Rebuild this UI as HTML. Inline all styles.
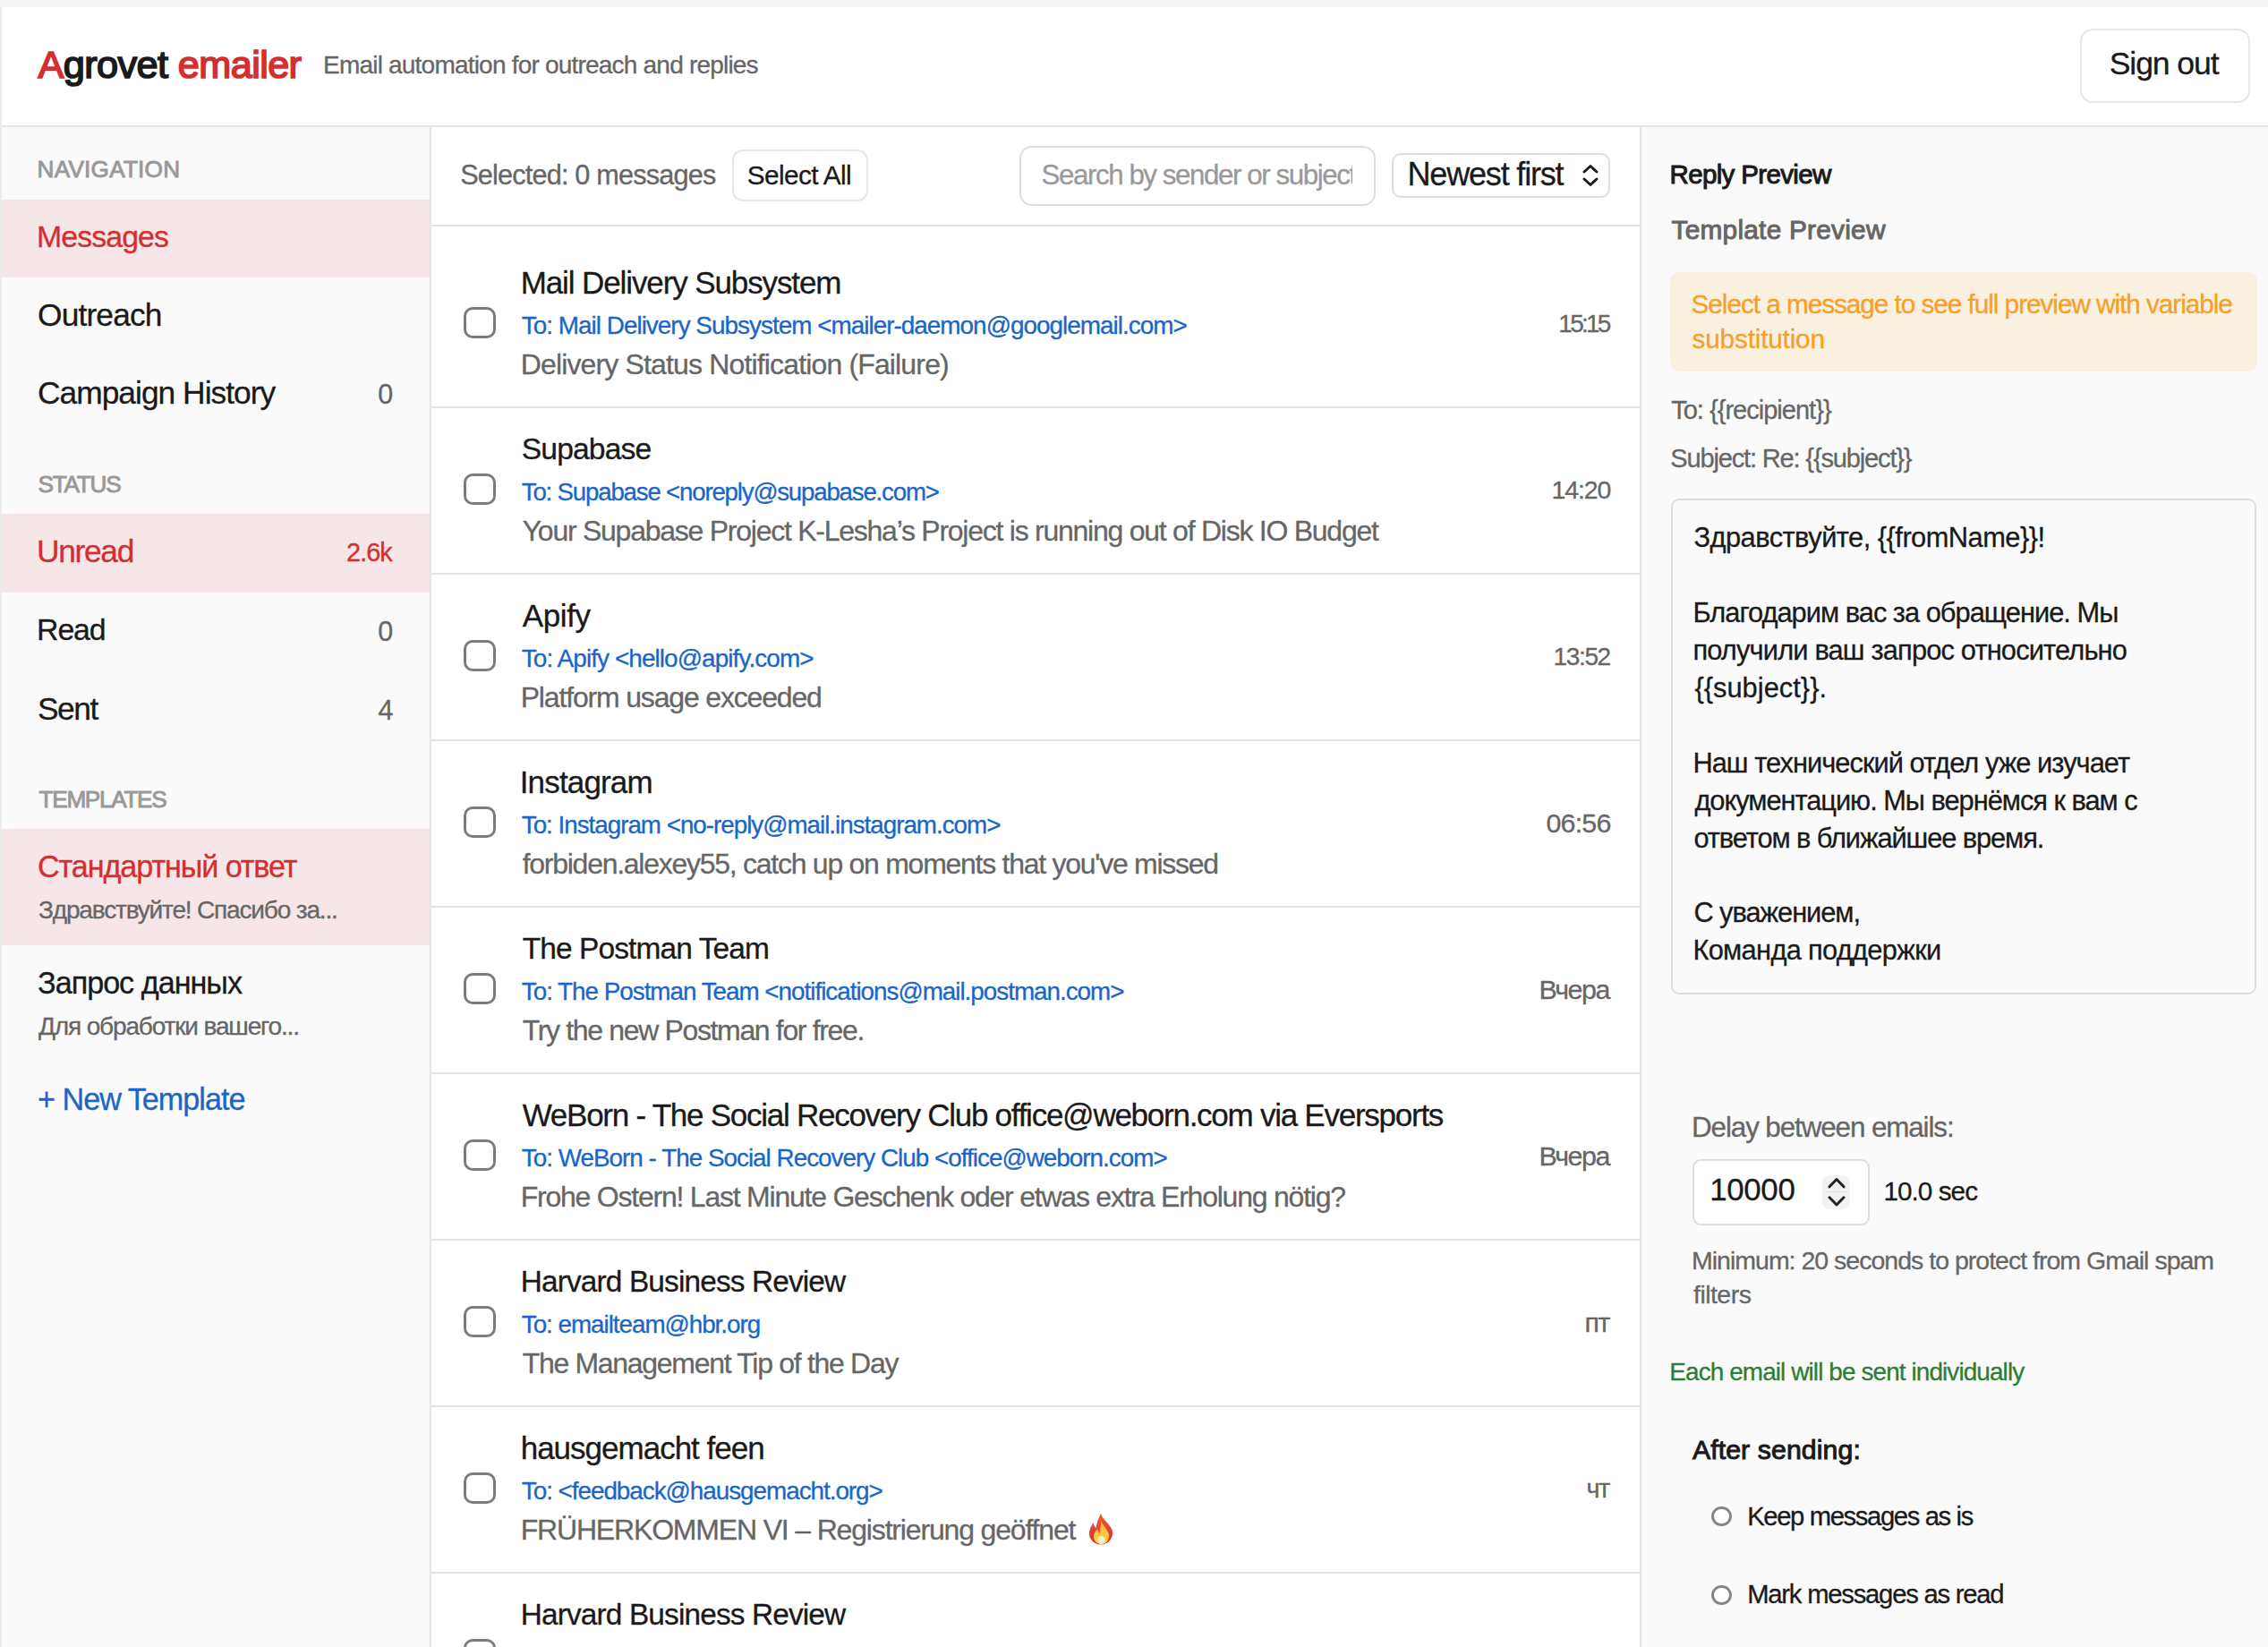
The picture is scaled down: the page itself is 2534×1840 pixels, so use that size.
<!DOCTYPE html>
<html><head><meta charset="utf-8"><title>Agrovet emailer</title>
<style>
html,body{margin:0;padding:0;}
body{width:2534px;height:1840px;position:relative;overflow:hidden;background:#f2f2f2;font-family:"Liberation Sans", sans-serif;}
.t{position:absolute;white-space:pre;line-height:1;-webkit-text-stroke:0.3px currentColor;}
</style></head><body>
<div style="position:absolute;left:0px;top:0px;width:2534px;height:8px;background:#f4f4f4"></div>
<div style="position:absolute;left:0px;top:8px;width:2px;height:1832px;background:#eaecef"></div>
<div style="position:absolute;left:2px;top:8px;width:2532px;height:132px;background:#ffffff"></div>
<div style="position:absolute;left:2px;top:140px;width:2532px;height:2px;background:#e3e3e3"></div>
<div style="position:absolute;left:2px;top:142px;width:478px;height:1698px;background:#fafafa"></div>
<div style="position:absolute;left:480px;top:142px;width:2px;height:1698px;background:#e3e3e3"></div>
<div style="position:absolute;left:482px;top:142px;width:1350px;height:1698px;background:#ffffff"></div>
<div style="position:absolute;left:1832px;top:142px;width:2px;height:1698px;background:#e3e3e3"></div>
<div style="position:absolute;left:1834px;top:142px;width:700px;height:1698px;background:#fafafa"></div>
<div style="position:absolute;left:2324px;top:32px;width:190px;height:83px;box-sizing:border-box;border:2px solid #e6e7ea;border-radius:14px;background:#fff"></div>
<div style="position:absolute;left:2px;top:222.6px;width:478px;height:87.00000000000003px;background:#f6e6e7"></div>
<div style="position:absolute;left:2px;top:574px;width:478px;height:87.5px;background:#f6e6e7"></div>
<div style="position:absolute;left:2px;top:926px;width:478px;height:129.5px;background:#f6e6e7"></div>
<div style="position:absolute;left:482px;top:251px;width:1350px;height:2px;background:#e3e3e3"></div>
<div style="position:absolute;left:818px;top:166.5px;width:152px;height:58.69999999999999px;box-sizing:border-box;border:2px solid #e6e7ea;border-radius:12px;background:#fff"></div>
<div style="position:absolute;left:1138.7px;top:162.5px;width:398.5px;height:67.5px;box-sizing:border-box;border:2px solid #dedede;border-radius:14px;background:#fff"></div>
<div style="position:absolute;left:1554.7px;top:170.8px;width:244.70000000000005px;height:50.19999999999999px;box-sizing:border-box;border:2px solid #dedede;border-radius:10px;background:#fff"></div>
<svg style="position:absolute;left:1764px;top:182px" width="26" height="28" viewBox="0 0 26 28"><path d="M6 10 L13 3.5 L20 10 M6 18 L13 24.5 L20 18" fill="none" stroke="#1a1a1a" stroke-width="2.9" stroke-linecap="round" stroke-linejoin="round"/></svg>
<div style="position:absolute;left:482px;top:453.5px;width:1350px;height:2.0px;background:#e3e3e3"></div>
<div style="position:absolute;left:518.2px;top:343.0px;width:35.39999999999998px;height:35.39999999999998px;box-sizing:border-box;border:3px solid #7c7c7c;border-radius:10px;background:#fff"></div>
<div style="position:absolute;left:482px;top:639.5px;width:1350px;height:2.0px;background:#e3e3e3"></div>
<div style="position:absolute;left:518.2px;top:529.0px;width:35.39999999999998px;height:35.39999999999998px;box-sizing:border-box;border:3px solid #7c7c7c;border-radius:10px;background:#fff"></div>
<div style="position:absolute;left:482px;top:825.5px;width:1350px;height:2.0px;background:#e3e3e3"></div>
<div style="position:absolute;left:518.2px;top:715.0px;width:35.39999999999998px;height:35.39999999999998px;box-sizing:border-box;border:3px solid #7c7c7c;border-radius:10px;background:#fff"></div>
<div style="position:absolute;left:482px;top:1011.5px;width:1350px;height:2.0px;background:#e3e3e3"></div>
<div style="position:absolute;left:518.2px;top:901.0px;width:35.39999999999998px;height:35.39999999999998px;box-sizing:border-box;border:3px solid #7c7c7c;border-radius:10px;background:#fff"></div>
<div style="position:absolute;left:482px;top:1197.5px;width:1350px;height:2.0px;background:#e3e3e3"></div>
<div style="position:absolute;left:518.2px;top:1087.0px;width:35.39999999999998px;height:35.40000000000009px;box-sizing:border-box;border:3px solid #7c7c7c;border-radius:10px;background:#fff"></div>
<div style="position:absolute;left:482px;top:1383.5px;width:1350px;height:2.0px;background:#e3e3e3"></div>
<div style="position:absolute;left:518.2px;top:1273.0px;width:35.39999999999998px;height:35.40000000000009px;box-sizing:border-box;border:3px solid #7c7c7c;border-radius:10px;background:#fff"></div>
<div style="position:absolute;left:482px;top:1569.5px;width:1350px;height:2.0px;background:#e3e3e3"></div>
<div style="position:absolute;left:518.2px;top:1459.0px;width:35.39999999999998px;height:35.40000000000009px;box-sizing:border-box;border:3px solid #7c7c7c;border-radius:10px;background:#fff"></div>
<div style="position:absolute;left:482px;top:1755.5px;width:1350px;height:2.0px;background:#e3e3e3"></div>
<div style="position:absolute;left:518.2px;top:1645.0px;width:35.39999999999998px;height:35.40000000000009px;box-sizing:border-box;border:3px solid #7c7c7c;border-radius:10px;background:#fff"></div>
<svg style="position:absolute;left:1215px;top:1690px" width="31" height="36" viewBox="0 0 31 36"><defs><linearGradient id="fl" x1="0" y1="0" x2="0" y2="1"><stop offset="0" stop-color="#f0563a"/><stop offset="1" stop-color="#d9302a"/></linearGradient><linearGradient id="fl2" x1="0" y1="0" x2="0" y2="1"><stop offset="0" stop-color="#fbb03b"/><stop offset="1" stop-color="#ffd54a"/></linearGradient></defs><path d="M15 0.5 C16 7 24 11 27.5 19 C30 27 24 35.5 15.5 35.5 C7 35.5 1.5 29.5 2 22 C2.5 17 5 14 6.5 11 C7 14 8 16 9.5 17 C10 11 13 6 15 0.5 Z" fill="url(#fl)"/><path d="M15.5 9 C17 15 23 18 24 25 C24.5 31 20.5 35 15.5 35 C10.5 35 6.5 31.5 7 26 C7.5 22 10 20 11 18 C12 21 13 22 13.5 23 C14 18 15 13 15.5 9 Z" fill="url(#fl2)"/><ellipse cx="15.5" cy="30.5" rx="4.2" ry="4.5" fill="#fff0d0"/></svg>
<div style="position:absolute;left:518.2px;top:1831.0px;width:35.39999999999998px;height:35.40000000000009px;box-sizing:border-box;border:3px solid #7c7c7c;border-radius:10px;background:#fff"></div>
<div style="position:absolute;left:1866.3px;top:304px;width:655.3px;height:111.30000000000001px;background:#f9f0df;border-radius:10px"></div>
<div style="position:absolute;left:1867px;top:556.5px;width:654px;height:554.0px;box-sizing:border-box;border:2px solid #dedede;border-radius:9px;background:#fafafa"></div>
<div style="position:absolute;left:1891px;top:1295px;width:198.4000000000001px;height:74px;box-sizing:border-box;border:2px solid #dedede;border-radius:9px;background:#fff"></div>
<div style="position:absolute;left:2036.4px;top:1312.9px;width:31.09999999999991px;height:38.299999999999955px;background:#f2f2f2;border-radius:8px"></div>
<div style="position:absolute;left:2041px;top:1331.2px;width:22px;height:1.2000000000000455px;background:#dcdcdc"></div>
<svg style="position:absolute;left:2036px;top:1313px" width="32" height="38" viewBox="0 0 32 38"><path d="M8 12.8 L16 4.5 L24 12.8 M8 24.8 L16 33 L24 24.8" fill="none" stroke="#222" stroke-width="3" stroke-linecap="round" stroke-linejoin="round"/></svg>
<div style="position:absolute;left:1912.3px;top:1682.6px;width:23.200000000000045px;height:22.700000000000045px;box-sizing:border-box;border:3px solid #858585;border-radius:50%;background:#fff"></div>
<div style="position:absolute;left:1912.3px;top:1770.5px;width:23.200000000000045px;height:22.700000000000045px;box-sizing:border-box;border:3px solid #858585;border-radius:50%;background:#fff"></div>
<div class="t" style="left:42.60px;top:50.93px;font-size:43.31px;color:#1a1a1a;font-weight:normal;letter-spacing:-0.628px;-webkit-text-stroke:1.7px currentColor"><span style="color:#d32f2f">A</span>grovet <span style="color:#d32f2f">emailer</span></div>
<div class="t" style="left:361.00px;top:59.15px;font-size:28.05px;color:#666;font-weight:normal;letter-spacing:-0.813px;">Email automation for outreach and replies</div>
<div class="t" style="left:2356.70px;top:53.86px;font-size:35.61px;color:#1a1a1a;font-weight:normal;letter-spacing:-1.096px;">Sign out</div>
<div class="t" style="left:41.60px;top:176.15px;font-size:26.16px;color:#999;font-weight:normal;letter-spacing:0.228px;-webkit-text-stroke:0.9px currentColor">NAVIGATION</div>
<div class="t" style="left:41.08px;top:247.83px;font-size:33.87px;color:#d32f2f;font-weight:normal;letter-spacing:-0.930px;">Messages</div>
<div class="t" style="left:42.00px;top:334.00px;font-size:35.32px;color:#1a1a1a;font-weight:normal;letter-spacing:-0.837px;">Outreach</div>
<div class="t" style="left:42.00px;top:421.40px;font-size:35.32px;color:#1a1a1a;font-weight:normal;letter-spacing:-0.964px;">Campaign History</div>
<div class="t" style="left:422.30px;top:425.46px;font-size:30.52px;color:#666;font-weight:normal;letter-spacing:0.000px;">0</div>
<div class="t" style="left:42.60px;top:528.15px;font-size:26.16px;color:#999;font-weight:normal;letter-spacing:-1.251px;-webkit-text-stroke:0.9px currentColor">STATUS</div>
<div class="t" style="left:41.00px;top:597.60px;font-size:35.32px;color:#d32f2f;font-weight:normal;letter-spacing:-1.307px;">Unread</div>
<div class="t" style="left:387.05px;top:602.99px;font-size:28.95px;color:#d32f2f;font-weight:normal;letter-spacing:-0.987px;">2.6k</div>
<div class="t" style="left:41.08px;top:686.95px;font-size:33.84px;color:#1a1a1a;font-weight:normal;letter-spacing:-1.125px;">Read</div>
<div class="t" style="left:422.30px;top:689.76px;font-size:30.52px;color:#666;font-weight:normal;letter-spacing:0.000px;">0</div>
<div class="t" style="left:42.00px;top:773.60px;font-size:35.32px;color:#1a1a1a;font-weight:normal;letter-spacing:-1.435px;">Sent</div>
<div class="t" style="left:422.50px;top:777.66px;font-size:30.52px;color:#666;font-weight:normal;letter-spacing:0.000px;">4</div>
<div class="t" style="left:43.60px;top:880.35px;font-size:26.16px;color:#999;font-weight:normal;letter-spacing:-1.317px;-webkit-text-stroke:0.9px currentColor">TEMPLATES</div>
<div class="t" style="left:42.00px;top:951.29px;font-size:34.16px;color:#d32f2f;font-weight:normal;letter-spacing:-1.079px;">Стандартный ответ</div>
<div class="t" style="left:43.00px;top:1002.55px;font-size:28.05px;color:#666;font-weight:normal;letter-spacing:-1.187px;">Здравствуйте! Спасибо за...</div>
<div class="t" style="left:42.00px;top:1081.19px;font-size:34.16px;color:#1a1a1a;font-weight:normal;letter-spacing:-0.998px;">Запрос данных</div>
<div class="t" style="left:43.00px;top:1132.55px;font-size:28.05px;color:#666;font-weight:normal;letter-spacing:-1.168px;">Для обработки вашего...</div>
<div class="t" style="left:42.00px;top:1211.09px;font-size:34.16px;color:#1a66c8;font-weight:normal;letter-spacing:-0.981px;">+ New Template</div>
<div class="t" style="left:514.20px;top:180.14px;font-size:30.67px;color:#666;font-weight:normal;letter-spacing:-0.816px;">Selected: 0 messages</div>
<div class="t" style="left:834.80px;top:180.88px;font-size:29.80px;color:#1a1a1a;font-weight:normal;letter-spacing:-0.625px;">Select All</div>
<div class="t" style="left:1163.50px;top:179.65px;font-size:31.25px;color:#999;font-weight:normal;letter-spacing:-1.401px;;width:347.50px;overflow:hidden;padding-bottom:0.3em">Search by sender or subject</div>
<div class="t" style="left:1572.50px;top:176.59px;font-size:36.05px;color:#1a1a1a;font-weight:normal;letter-spacing:-1.199px;">Newest first</div>
<div class="t" style="left:581.70px;top:297.65px;font-size:35.03px;color:#1a1a1a;font-weight:normal;letter-spacing:-1.116px;">Mail Delivery Subsystem</div>
<div class="t" style="left:582.80px;top:349.72px;font-size:27.86px;color:#1a66c8;font-weight:normal;letter-spacing:-0.973px;">To: Mail Delivery Subsystem &lt;mailer-daemon@googlemail.com&gt;</div>
<div class="t" style="left:581.70px;top:390.53px;font-size:31.98px;color:#666;font-weight:normal;letter-spacing:-0.834px;">Delivery Status Notification (Failure)</div>
<div class="t" style="left:1741.36px;top:347.84px;font-size:27.95px;color:#666;font-weight:normal;letter-spacing:-2.760px;">15:15</div>
<div class="t" style="left:582.74px;top:484.82px;font-size:33.65px;color:#1a1a1a;font-weight:normal;letter-spacing:-0.874px;">Supabase</div>
<div class="t" style="left:582.80px;top:535.92px;font-size:27.62px;color:#1a66c8;font-weight:normal;letter-spacing:-1.172px;">To: Supabase &lt;noreply@supabase.com&gt;</div>
<div class="t" style="left:583.70px;top:576.53px;font-size:31.98px;color:#666;font-weight:normal;letter-spacing:-1.236px;">Your Supabase Project K-Lesha’s Project is running out of Disk IO Budget</div>
<div class="t" style="left:1733.52px;top:533.38px;font-size:28.49px;color:#666;font-weight:normal;letter-spacing:-1.136px;">14:20</div>
<div class="t" style="left:583.70px;top:669.65px;font-size:35.03px;color:#1a1a1a;font-weight:normal;letter-spacing:-0.384px;">Apify</div>
<div class="t" style="left:582.80px;top:721.68px;font-size:27.91px;color:#1a66c8;font-weight:normal;letter-spacing:-0.913px;">To: Apify &lt;hello@apify.com&gt;</div>
<div class="t" style="left:581.70px;top:762.53px;font-size:31.98px;color:#666;font-weight:normal;letter-spacing:-1.153px;">Platform usage exceeded</div>
<div class="t" style="left:1735.55px;top:719.74px;font-size:28.07px;color:#666;font-weight:normal;letter-spacing:-1.386px;">13:52</div>
<div class="t" style="left:580.70px;top:855.65px;font-size:35.03px;color:#1a1a1a;font-weight:normal;letter-spacing:-0.840px;">Instagram</div>
<div class="t" style="left:582.80px;top:907.79px;font-size:27.77px;color:#1a66c8;font-weight:normal;letter-spacing:-1.000px;">To: Instagram &lt;no-reply@mail.instagram.com&gt;</div>
<div class="t" style="left:583.70px;top:948.53px;font-size:31.98px;color:#666;font-weight:normal;letter-spacing:-1.251px;">forbiden.alexey55, catch up on moments that you&#x27;ve missed</div>
<div class="t" style="left:1727.40px;top:903.79px;font-size:30.38px;color:#666;font-weight:normal;letter-spacing:-0.772px;">06:56</div>
<div class="t" style="left:583.70px;top:1042.97px;font-size:33.47px;color:#1a1a1a;font-weight:normal;letter-spacing:-0.894px;">The Postman Team</div>
<div class="t" style="left:582.80px;top:1093.76px;font-size:27.81px;color:#1a66c8;font-weight:normal;letter-spacing:-0.998px;">To: The Postman Team &lt;notifications@mail.postman.com&gt;</div>
<div class="t" style="left:583.70px;top:1134.53px;font-size:31.98px;color:#666;font-weight:normal;letter-spacing:-1.329px;">Try the new Postman for free.</div>
<div class="t" style="left:1719.40px;top:1089.79px;font-size:30.38px;color:#666;font-weight:normal;letter-spacing:-1.457px;">Вчера</div>
<div class="t" style="left:583.70px;top:1227.65px;font-size:35.03px;color:#1a1a1a;font-weight:normal;letter-spacing:-1.263px;">WeBorn - The Social Recovery Club office@weborn.com via Eversports</div>
<div class="t" style="left:582.80px;top:1279.75px;font-size:27.83px;color:#1a66c8;font-weight:normal;letter-spacing:-0.981px;">To: WeBorn - The Social Recovery Club &lt;office@weborn.com&gt;</div>
<div class="t" style="left:581.70px;top:1320.53px;font-size:31.98px;color:#666;font-weight:normal;letter-spacing:-1.210px;">Frohe Ostern! Last Minute Geschenk oder etwas extra Erholung nötig?</div>
<div class="t" style="left:1719.40px;top:1275.79px;font-size:30.38px;color:#666;font-weight:normal;letter-spacing:-1.457px;">Вчера</div>
<div class="t" style="left:581.79px;top:1415.04px;font-size:33.39px;color:#1a1a1a;font-weight:normal;letter-spacing:-0.852px;">Harvard Business Review</div>
<div class="t" style="left:582.80px;top:1465.76px;font-size:27.81px;color:#1a66c8;font-weight:normal;letter-spacing:-1.024px;">To: emailteam@hbr.org</div>
<div class="t" style="left:583.70px;top:1506.53px;font-size:31.98px;color:#666;font-weight:normal;letter-spacing:-1.285px;">The Management Tip of the Day</div>
<div class="t" style="left:1770.40px;top:1461.79px;font-size:30.38px;color:#666;font-weight:normal;letter-spacing:-1.440px;">пт</div>
<div class="t" style="left:581.70px;top:1599.65px;font-size:35.03px;color:#1a1a1a;font-weight:normal;letter-spacing:-1.009px;">hausgemacht feen</div>
<div class="t" style="left:582.80px;top:1651.72px;font-size:27.86px;color:#1a66c8;font-weight:normal;letter-spacing:-1.036px;">To: &lt;feedback@hausgemacht.org&gt;</div>
<div class="t" style="left:581.70px;top:1692.53px;font-size:31.98px;color:#666;font-weight:normal;letter-spacing:-1.151px;">FRÜHERKOMMEN VI – Registrierung geöffnet</div>
<div class="t" style="left:1772.45px;top:1649.04px;font-size:28.89px;color:#666;font-weight:normal;letter-spacing:-1.409px;">чт</div>
<div class="t" style="left:581.79px;top:1787.04px;font-size:33.39px;color:#1a1a1a;font-weight:normal;letter-spacing:-0.852px;">Harvard Business Review</div>
<div class="t" style="left:582.80px;top:1837.76px;font-size:27.81px;color:#1a66c8;font-weight:normal;letter-spacing:-1.024px;">To: emailteam@hbr.org</div>
<div class="t" style="left:583.70px;top:1878.53px;font-size:31.98px;color:#666;font-weight:normal;letter-spacing:-1.285px;">The Management Tip of the Day</div>
<div class="t" style="left:1772.45px;top:1835.04px;font-size:28.89px;color:#666;font-weight:normal;letter-spacing:-1.409px;">чт</div>
<div class="t" style="left:1865.60px;top:179.62px;font-size:29.51px;color:#1a1a1a;font-weight:normal;letter-spacing:-0.661px;-webkit-text-stroke:1px currentColor">Reply Preview</div>
<div class="t" style="left:1867.60px;top:242.08px;font-size:29.80px;color:#666;font-weight:normal;letter-spacing:0.245px;-webkit-text-stroke:1px currentColor">Template Preview</div>
<div class="t" style="left:1889.50px;top:325.28px;font-size:29.80px;color:#f5a02a;font-weight:normal;letter-spacing:-1.063px;">Select a message to see full preview with variable</div>
<div class="t" style="left:1890.50px;top:364.08px;font-size:29.80px;color:#f5a02a;font-weight:normal;letter-spacing:-0.199px;">substitution</div>
<div class="t" style="left:1867.20px;top:443.79px;font-size:29.07px;color:#666;font-weight:normal;letter-spacing:-1.007px;">To: {{recipient}}</div>
<div class="t" style="left:1866.20px;top:497.79px;font-size:29.07px;color:#666;font-weight:normal;letter-spacing:-1.171px;">Subject: Re: {{subject}}</div>
<div class="t" style="left:1892.40px;top:586.12px;font-size:30.81px;color:#1a1a1a;font-weight:normal;letter-spacing:-0.516px;">Здравствуйте, {{fromName}}!</div>
<div class="t" style="left:1891.40px;top:669.92px;font-size:30.81px;color:#1a1a1a;font-weight:normal;letter-spacing:-0.983px;">Благодарим вас за обращение. Мы</div>
<div class="t" style="left:1891.40px;top:711.82px;font-size:30.81px;color:#1a1a1a;font-weight:normal;letter-spacing:-0.832px;">получили ваш запрос относительно</div>
<div class="t" style="left:1893.40px;top:753.92px;font-size:30.81px;color:#1a1a1a;font-weight:normal;letter-spacing:0.034px;">{{subject}}.</div>
<div class="t" style="left:1891.40px;top:837.92px;font-size:30.81px;color:#1a1a1a;font-weight:normal;letter-spacing:-0.959px;">Наш технический отдел уже изучает</div>
<div class="t" style="left:1893.40px;top:880.12px;font-size:30.81px;color:#1a1a1a;font-weight:normal;letter-spacing:-1.027px;">документацию. Мы вернёмся к вам с</div>
<div class="t" style="left:1892.40px;top:921.72px;font-size:30.81px;color:#1a1a1a;font-weight:normal;letter-spacing:-1.086px;">ответом в ближайшее время.</div>
<div class="t" style="left:1892.40px;top:1005.12px;font-size:30.81px;color:#1a1a1a;font-weight:normal;letter-spacing:-1.043px;">С уважением,</div>
<div class="t" style="left:1891.40px;top:1047.42px;font-size:30.81px;color:#1a1a1a;font-weight:normal;letter-spacing:-0.677px;">Команда поддержки</div>
<div class="t" style="left:1890.00px;top:1244.02px;font-size:31.40px;color:#666;font-weight:normal;letter-spacing:-1.107px;">Delay between emails:</div>
<div class="t" style="left:1910.30px;top:1312.47px;font-size:34.88px;color:#1a1a1a;font-weight:normal;letter-spacing:-0.371px;">10000</div>
<div class="t" style="left:2104.42px;top:1316.24px;font-size:29.72px;color:#1a1a1a;font-weight:normal;letter-spacing:-0.959px;">10.0 sec</div>
<div class="t" style="left:1890.00px;top:1394.28px;font-size:28.49px;color:#666;font-weight:normal;letter-spacing:-0.986px;">Minimum: 20 seconds to protect from Gmail spam</div>
<div class="t" style="left:1892.00px;top:1431.58px;font-size:28.49px;color:#666;font-weight:normal;letter-spacing:-0.530px;">filters</div>
<div class="t" style="left:1865.30px;top:1518.58px;font-size:27.91px;color:#2e7d32;font-weight:normal;letter-spacing:-0.892px;">Each email will be sent individually</div>
<div class="t" style="left:1890.90px;top:1605.21px;font-size:30.23px;color:#1a1a1a;font-weight:normal;letter-spacing:0.110px;-webkit-text-stroke:1px currentColor">After sending:</div>
<div class="t" style="left:1952.20px;top:1679.57px;font-size:29.22px;color:#1a1a1a;font-weight:normal;letter-spacing:-1.365px;">Keep messages as is</div>
<div class="t" style="left:1952.20px;top:1767.47px;font-size:29.22px;color:#1a1a1a;font-weight:normal;letter-spacing:-1.219px;">Mark messages as read</div>
</body></html>
